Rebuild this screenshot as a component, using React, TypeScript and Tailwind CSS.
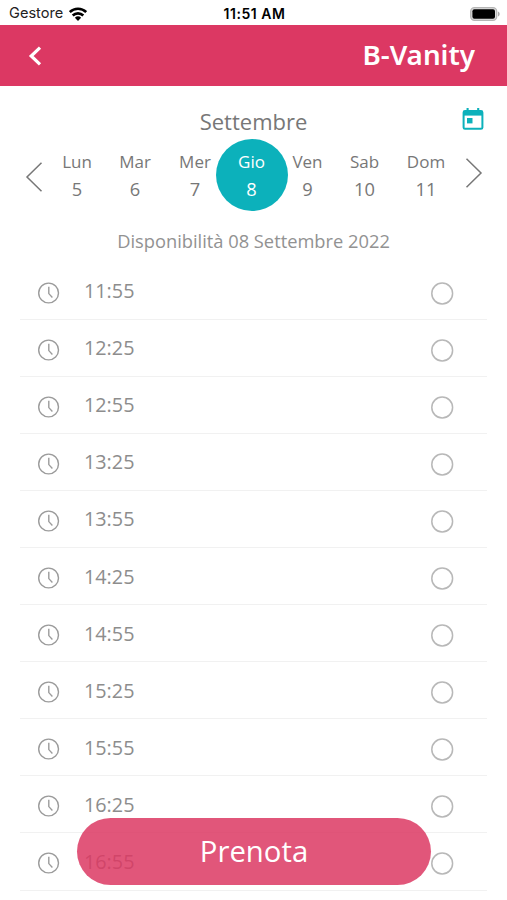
import React from 'react';

interface Day {
  name: string;
  number: number;
  width: string;
}

const days: Day[] = [
  { name: 'Lun', number: 5, width: 'w-[58px]' },
  { name: 'Mar', number: 6, width: 'w-[58px]' },
  { name: 'Mer', number: 7, width: 'w-[62px]' },
  { name: 'Gio', number: 8, width: 'w-[51px]' },
  { name: 'Ven', number: 9, width: 'w-[61px]' },
  { name: 'Sab', number: 10, width: 'w-[53px]' },
  { name: 'Dom', number: 11, width: 'w-[70px]' },
];

const slots = ['11:55', '12:25', '12:55', '13:25', '13:55', '14:25', '14:55', '15:25', '15:55', '16:25', '16:55'];

const StatusBar: React.FC = () => (
  <div className="h-[25px] flex-shrink-0 grid grid-cols-3 items-center pl-[9px] pr-[7px] pt-[2px] text-black font-normal font-['Inter','Liberation_Sans',sans-serif]">
    <div className="flex items-center gap-[6px]">
      <span className="text-[14.6px] leading-none text-[#222]">Gestore</span>
      <svg width="18" height="14" viewBox="0 0 18 14" fill="none" stroke="currentColor" strokeWidth="2.6">
        <path d="M.8 5.1a11.8 11.8 0 0 1 16.4 0" />
        <path d="M3.7 8.5a7.6 7.6 0 0 1 10.6 0" />
        <path d="M9 13.9 5.9 10.8a4.5 4.5 0 0 1 6.2 0Z" fill="currentColor" stroke="none" />
      </svg>
    </div>
    <span className="text-center text-[14px] leading-none tracking-[0.04em] font-semibold">11:51 AM</span>
    <svg className="justify-self-end" width="30" height="14" viewBox="0 0 30 14">
      <rect x=".7" y=".7" width="26" height="12.6" rx="3.8" fill="#ddd" stroke="#b5b5b5" strokeWidth="1.3" />
      <rect x="2.4" y="2.3" width="22.6" height="9.4" rx="2" fill="#000" />
      <path d="M28 4.6c2.2.7 2.2 4.1 0 4.8Z" fill="#aaa" />
    </svg>
  </div>
);

const ClockIcon: React.FC = () => (
  <svg width="22" height="22" viewBox="0 0 22 22" fill="none" stroke="#9b9b9b" strokeWidth="1.4">
    <circle cx="10.6" cy="11" r="9.9" />
    <path d="M10.8 4.8v6.8l3.6 3.9" />
  </svg>
);

const RadioIcon: React.FC = () => (
  <svg width="23" height="23" viewBox="0 0 23 23" fill="none" stroke="#b8b8b8" strokeWidth="1.5">
    <circle cx="11.2" cy="11.5" r="10.4" />
  </svg>
);

const CalendarIcon: React.FC = () => (
  <svg width="22" height="24" viewBox="0 0 22 24" fill="none">
    <path d="M5.6 1v4M16.2 1v4" stroke="#0cb1bb" strokeWidth="2.1" />
    <rect x="1.6" y="4" width="18.8" height="17.8" rx="1.4" stroke="#0cb1bb" strokeWidth="2" />
    <path d="M1.5 4h19v4.6h-19z" fill="#0cb1bb" />
    <rect x="5" y="11" width="5.5" height="5.4" fill="#0cb1bb" />
  </svg>
);

const DayCell: React.FC<{ day: Day; isSelected: boolean }> = ({ day, isSelected }) => (
  <button className={`${day.width} relative h-[72px] flex flex-col items-center justify-center ${isSelected ? 'text-white' : 'text-[#777]'}`}>
    {isSelected && (
      <span className="absolute top-0 left-1/2 -translate-x-1/2 w-[72px] h-[72px] rounded-full bg-[#0cb1bb]" />
    )}
    <span className="relative top-px text-[17px] leading-7">{day.name}</span>
    <span className="relative text-[18.3px] leading-7">{day.number}</span>
  </button>
);

const App: React.FC = () => {
  return (
    <div className="relative w-full h-[900px] overflow-hidden flex flex-col bg-white font-['Open_Sans','Noto_Sans',sans-serif] font-[370]">
      <StatusBar />

      <header className="h-[61px] flex-shrink-0 flex items-center justify-between pl-[28px] pr-[32px] bg-[#dc3863] text-white">
        <button>
          <svg width="14" height="22" viewBox="0 0 14 22" fill="none" stroke="currentColor" strokeWidth="3.2">
            <path d="M12 2.6 3.2 11l8.8 8.4" />
          </svg>
        </button>
        <h1 className="relative -top-px text-[27.8px] leading-none font-semibold font-['Noto_Sans',sans-serif]">B-Vanity</h1>
      </header>

      <div className="relative flex-shrink-0 h-[53px] flex items-end justify-center">
        <h2 className="text-[22px] leading-[35px] text-[#777]">Settembre</h2>
        <button className="absolute right-[23px] top-[21px]">
          <CalendarIcon />
        </button>
      </div>

      {/* Week strip */}
      <div className="flex-shrink-0 flex h-[72px]">
        <button className="w-[48px] pl-[25px] pt-[3px]">
          <svg width="18" height="32" viewBox="0 0 18 32" fill="none" stroke="#777" strokeWidth="1.5">
            <path d="M16.5 1.8 2 16l14.5 14.2" />
          </svg>
        </button>
        {days.map((day) => (
          <DayCell key={day.number} day={day} isSelected={day.number === 8} />
        ))}
        <button className="pl-[4px] pb-[4px]">
          <svg width="18" height="32" viewBox="0 0 18 32" fill="none" stroke="#777" strokeWidth="1.5">
            <path d="M1.5 1.8 16 16 1.5 30.2" />
          </svg>
        </button>
      </div>

      <p className="flex-shrink-0 h-[51.5px] pt-[16px] text-center text-[18.3px] leading-7 text-[#929292]">
        Disponibilità 08 Settembre 2022
      </p>

      <ul className="px-5">
        {slots.map((slot) => (
          <li key={slot} className="h-[57.1px] flex items-center border-b border-[#f1f1f1] pl-[18px] pr-[33px]">
            <span className="pt-[4px]">
              <ClockIcon />
            </span>
            <span className="flex-1 pt-px pl-[24px] text-[19.8px] leading-7 text-[#8d8d8d]">{slot}</span>
            <span className="pt-[5px]">
              <RadioIcon />
            </span>
          </li>
        ))}
      </ul>

      <button className="absolute left-[77px] top-[818px] w-[354px] h-[67px] rounded-full bg-[#dc3863]/85 text-white text-[29.3px] leading-none">
        Prenota
      </button>
    </div>
  );
};

export default App;
